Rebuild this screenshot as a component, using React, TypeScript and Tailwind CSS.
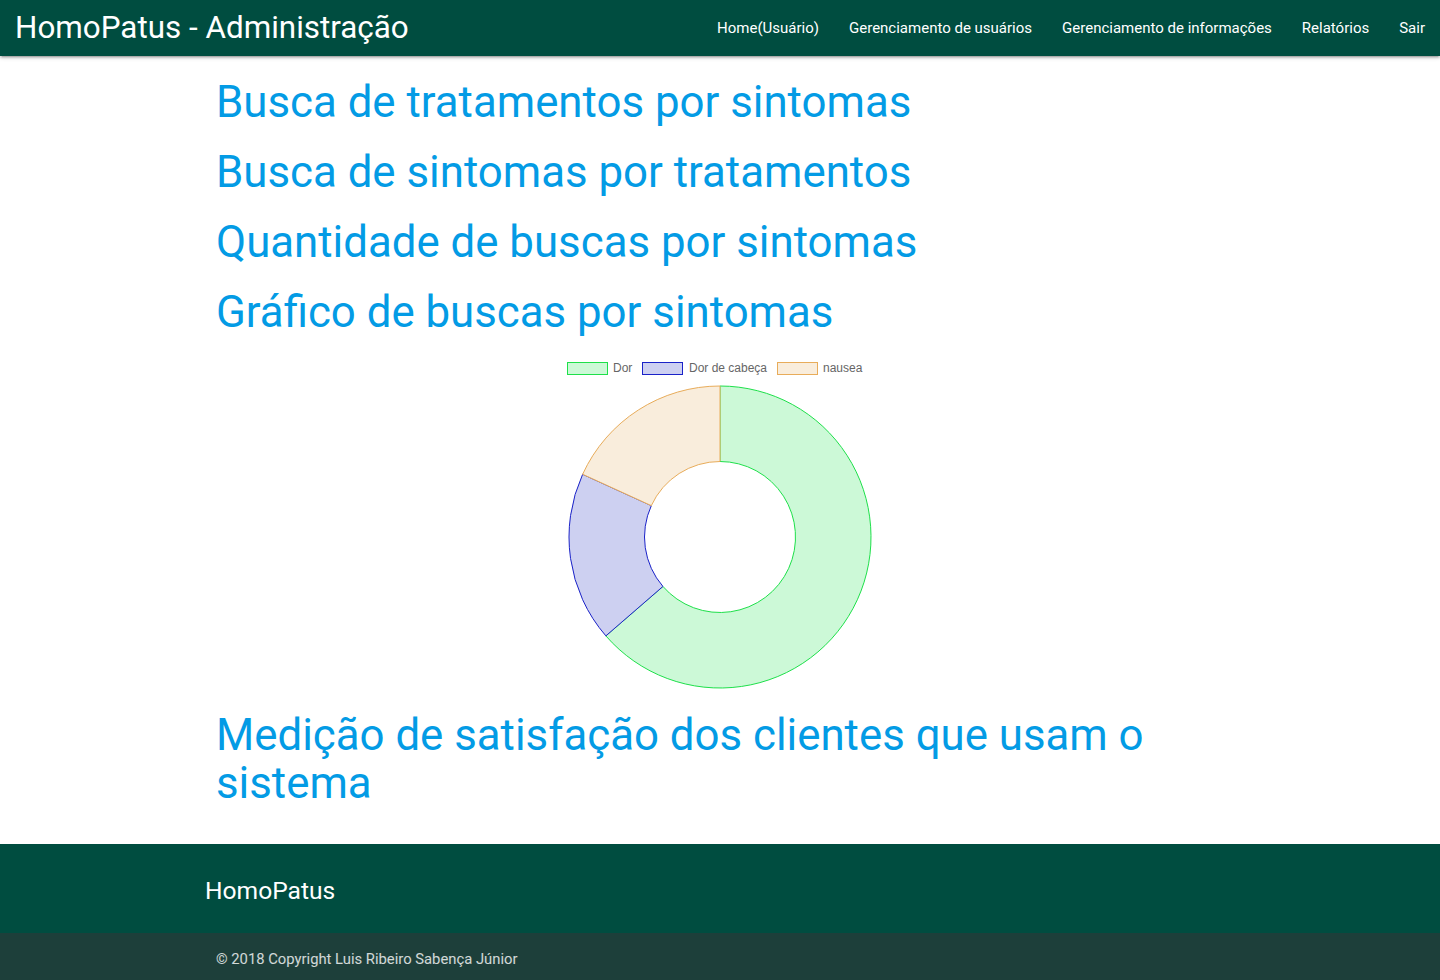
const links = ["Home(Usuário)", "Gerenciamento de usuários", "Gerenciamento de informações", "Relatórios", "Sair"]

const titles = [
    "Busca de tratamentos por sintomas",
    "Busca de sintomas por tratamentos",
    "Quantidade de buscas por sintomas",
    "Gráfico de buscas por sintomas",
]

const data = [
    { label: "Dor", value: 7, fill: "#ccf9d7", stroke: "#1ee04a" },
    { label: "Dor de cabeça", value: 2, fill: "#cdd0f1", stroke: "#1a22c8" },
    { label: "nausea", value: 2, fill: "#f9eddc", stroke: "#e8ac5a" },
]

function arc(cx: number, cy: number, r1: number, r2: number, a0: number, a1: number) {
    const p = (r: number, a: number) => [cx + r * Math.cos(a), cy + r * Math.sin(a)]
    const large = a1 - a0 > Math.PI ? 1 : 0
    const [x0, y0] = p(r2, a0)
    const [x1, y1] = p(r2, a1)
    const [x2, y2] = p(r1, a1)
    const [x3, y3] = p(r1, a0)
    return `M${x0} ${y0} A${r2} ${r2} 0 ${large} 1 ${x1} ${y1} L${x2} ${y2} A${r1} ${r1} 0 ${large} 0 ${x3} ${y3} Z`
}

function Donut() {
    const total = data.reduce((s, d) => s + d.value, 0)
    let a = -Math.PI / 2
    const legend = [
        { box: 351, text: 397 },
        { box: 426, text: 473 },
        { box: 561, text: 607 },
    ]
    return (
        <svg width="1008" height="337" className="mt-4 block">
            {data.map((d, i) => (
                <g key={d.label}>
                    <rect x={legend[i].box + 0.5} y={10.5} width={40} height={12} fill={d.fill} stroke={d.stroke} strokeWidth={1} />
                    <text x={legend[i].text} y={20} fontSize={12} fill="#666" fontFamily="'Liberation Sans', Arial, sans-serif">
                        {d.label}
                    </text>
                </g>
            ))}
            {data.map((d) => {
                const a0 = a
                const a1 = a + (d.value / total) * Math.PI * 2
                a = a1
                return <path key={d.label} d={arc(504, 185, 75.5, 151, a0, a1)} fill={d.fill} stroke={d.stroke} strokeWidth={1} />
            })}
        </svg>
    )
}

export default function App() {
    return (
        <div className="flex min-h-screen flex-col bg-white font-['Roboto',sans-serif]">
            <nav className="relative z-10 flex h-14 items-center justify-between bg-[#004d40] text-white shadow-[0_2px_2px_0_rgba(0,0,0,0.14),0_3px_1px_-2px_rgba(0,0,0,0.12),0_1px_5px_0_rgba(0,0,0,0.2)]">
                <a className="pl-[15px] text-[31.4px] leading-[56px]" href="#">
                    HomoPatus - Administração
                </a>
                <ul className="flex items-center">
                    {links.map((l) => (
                        <li key={l}>
                            <a className="block px-[15px] text-[15px] leading-[56px]" href="#">
                                {l}
                            </a>
                        </li>
                    ))}
                </ul>
            </nav>

            <main className="mx-auto w-[1008px] flex-1 pb-[37px]">
                {titles.map((t) => (
                    <h3 key={t} className="mt-[22px] text-[43.8px] leading-[48px] text-[#039be5]">
                        {t}
                    </h3>
                ))}
                <Donut />
                <h3 className="mt-[22px] text-[43.8px] leading-[48px] text-[#039be5]">
                    Medição de satisfação dos clientes que usam o sistema
                </h3>
            </main>

            <footer className="bg-[#004d40] text-white">
                <div className="mx-auto w-[1030px] pt-[29px] pb-[25px]">
                    <h5 className="text-[24.6px] leading-[35px]">HomoPatus</h5>
                </div>
                <div className="flex h-[50px] items-center bg-[#1d3f3a] pt-[2px]">
                    <div className="mx-auto w-[1008px] text-[14.8px] text-white/80">
                        © 2018 Copyright Luis Ribeiro Sabença Júnior
                    </div>
                </div>
            </footer>
        </div>
    )
}
